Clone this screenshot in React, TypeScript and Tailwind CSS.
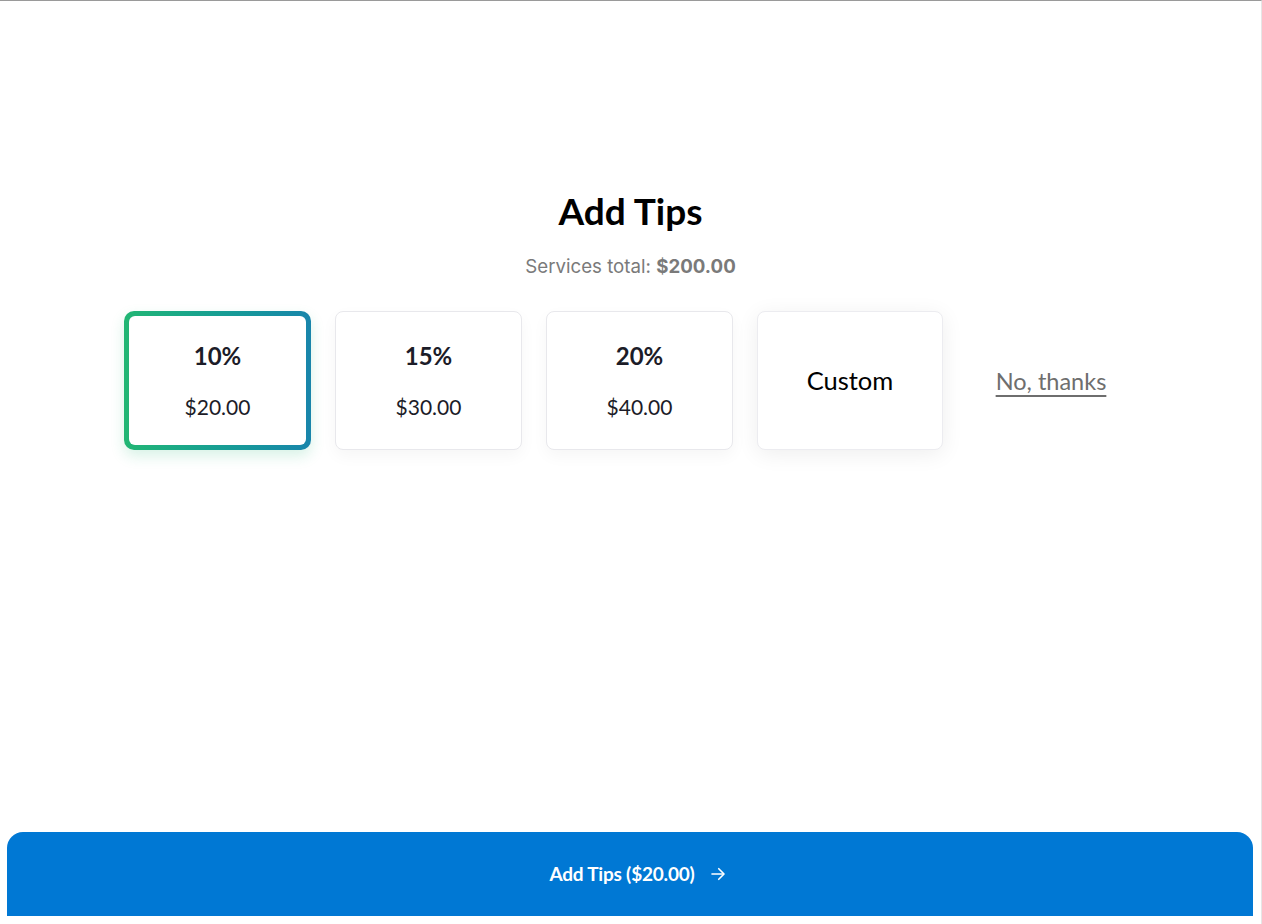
import { useState } from 'react';

const options = [
  { id: '10', label: '10%', amount: '$20.00' },
  { id: '15', label: '15%', amount: '$30.00' },
  { id: '20', label: '20%', amount: '$40.00' },
];

export default function App() {
  const [selected, setSelected] = useState('10');

  return (
    <div
      className="flex h-[924px] flex-col border-t border-r border-t-[#9a9a9a] border-r-[#e6e6e6] bg-white"
      style={{ fontFamily: 'Lato, "Noto Sans", sans-serif' }}
    >
      <div className="flex flex-col items-center pt-[187px]">
        <h1 className="text-[37px] leading-[46px] font-bold text-black">Add Tips</h1>
        <p
          className="mt-[21px] text-[18.7px] leading-[24px] text-[#7a7a7a]"
          style={{ fontFamily: 'Inter, "Liberation Sans", sans-serif' }}
        >
          Services total: <span className="font-bold">$200.00</span>
        </p>

        {/* Tip options row */}
        <div className="mt-[32px] flex items-center gap-[24px] pr-[2px]">
          {options.map((o) =>
            selected === o.id ? (
              <button
                key={o.id}
                onClick={() => setSelected(o.id)}
                className="h-[139px] w-[187px] rounded-[10px] bg-gradient-to-r from-[#22b673] to-[#1985ab] p-[5px] shadow-[0_6px_14px_rgba(34,182,115,0.18)]"
              >
                <div className="flex h-full w-full flex-col items-center justify-center rounded-[6px] bg-white text-[#1c1c28]">
                  <span className="text-[24px] leading-[28px] font-bold">{o.label}</span>
                  <span className="mt-[24px] text-[21px] leading-[26px]">{o.amount}</span>
                </div>
              </button>
            ) : (
              <button
                key={o.id}
                onClick={() => setSelected(o.id)}
                className="flex h-[139px] w-[187px] flex-col items-center justify-center rounded-[8px] border border-[#e8e8ec] bg-white text-[#1c1c28] shadow-[0_6px_16px_rgba(0,0,0,0.04)]"
              >
                <span className="text-[24px] leading-[28px] font-bold">{o.label}</span>
                <span className="mt-[24px] text-[21px] leading-[26px]">{o.amount}</span>
              </button>
            )
          )}
          <button
            onClick={() => setSelected('custom')}
            className={`flex h-[139px] w-[186px] items-center justify-center rounded-[8px] border bg-white text-[25.5px] text-black shadow-[0_4px_22px_rgba(0,0,0,0.07)] ${
              selected === 'custom' ? 'border-[#1985ab]' : 'border-[#ececf0]'
            }`}
          >
            Custom
          </button>
          <div className="flex w-[168px] justify-center">
            <button
              onClick={() => setSelected('none')}
              className="text-[23.5px] leading-[28px] text-[#6e6e6e] underline decoration-[#6e6e6e] decoration-[1.5px] underline-offset-[5px]"
            >
              No, thanks
            </button>
          </div>
        </div>
      </div>

      {/* Submit bar */}
      <div className="mt-auto mb-[8px] ml-[7px] mr-[8px]">
        <button className="flex h-[84px] w-full items-center justify-center gap-[14px] rounded-t-[16px] bg-[#0078d4] pl-[16px] text-[19px] font-bold text-white">
          <span className="tracking-[-0.2px]">Add Tips ($20.00)</span>
          <svg width="18" height="18" viewBox="0 0 24 24" fill="none" stroke="currentColor" strokeWidth="2.2" strokeLinecap="round" strokeLinejoin="round">
            <path d="M4 12h15" />
            <path d="M13 5l7 7-7 7" />
          </svg>
        </button>
      </div>
    </div>
  );
}
